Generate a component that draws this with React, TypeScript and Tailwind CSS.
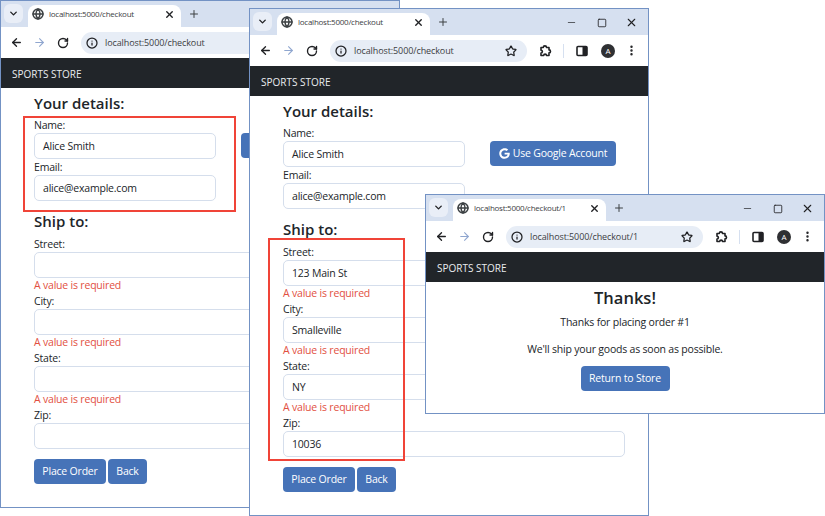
import React from 'react';
import { ArrowLeft, ArrowRight, ChevronDown, Globe, Info, Minus, MoreVertical, Plus, RotateCw, Square, Star, X } from 'lucide-react';
import { FaGoogle } from 'react-icons/fa';

const btn = 'flex items-center justify-center h-[25px] rounded-[4px] bg-[#4673b8] text-white text-[10.5px] tracking-[-0.2px]';

function Browser({ url, className, children }: { url: string; className: string; children: React.ReactNode }) {
  return (
    <div className={`absolute w-[400px] bg-white border border-[#7392c4] overflow-hidden ${className}`}>
      <div className="flex items-end h-[26px] bg-[#d6e0f0] pl-[3px] text-[#202124]">
        <div className="flex items-center justify-center w-[19px] h-[19px] mb-[4px] rounded-[6px] bg-[#e9eef7]">
          <ChevronDown size={11} strokeWidth={3} />
        </div>
        <div className="flex items-center w-[153px] h-[22px] ml-[5px] pl-[3px] pb-[4px] rounded-t-[8px] bg-white">
          <Globe size={12} strokeWidth={3} className="ml-[1px] text-[#3c4043]" />
          <span className="ml-[5px] text-[8px] tracking-[-0.25px] text-[#3c4043]">{url}</span>
          <X size={11} strokeWidth={3} className="ml-auto mr-[6px]" />
        </div>
        <Plus size={12} strokeWidth={2} className="ml-[7px] mb-[7px] text-[#3c4043]" />
        <Minus size={11} strokeWidth={1.5} className="ml-auto mb-[7px]" />
        <Square size={10} strokeWidth={2} className="ml-[20px] mb-[7px]" />
        <X size={13} strokeWidth={2} className="ml-[18px] mr-[10px] mb-[6px]" />
      </div>
      <div className="flex items-center h-[31px] pl-[9px] pr-[10px] bg-white text-[#202124]">
        <ArrowLeft size={13} strokeWidth={2.5} />
        <ArrowRight size={13} strokeWidth={2} className="ml-[10px] text-[#8fa6cf]" />
        <RotateCw size={12} strokeWidth={2.75} className="ml-[11px]" />
        <div className="flex items-center w-[197px] h-[22px] ml-[12px] pl-[5px] rounded-full bg-[#e7edf6]">
          <Info size={12} strokeWidth={2.5} />
          <span className="ml-[7px] text-[9px] tracking-[-0.1px] text-[#3c4043]">{url}</span>
          <Star size={12} strokeWidth={2.5} className="ml-auto mr-[10px]" />
        </div>
        <svg width="13" height="13" viewBox="0 0 13 13" className="ml-[12px]" fill="none" stroke="#202124" strokeWidth="1.6" strokeLinejoin="round">
          <path d="M2 3.5h2.3a1.6 1.6 0 0 1 3.2 0H10v2.4a1.5 1.5 0 0 1 0 3V11.5H7.5a1.4 1.4 0 0 0-2.8 0H2V9a1.4 1.4 0 0 0 0-2.8z" />
        </svg>
        <div className="w-px h-[14px] ml-[11px] bg-[#d6e0f0]" />
        <svg width="12" height="12" viewBox="0 0 12 12" className="ml-[12px]">
          <rect x="1" y="1.5" width="10" height="9" rx="1" fill="none" stroke="#202124" strokeWidth="1.6" />
          <rect x="6.5" y="1.5" width="4.5" height="9" fill="#202124" />
        </svg>
        <div className="flex items-center justify-center w-[14px] h-[14px] ml-[13px] rounded-full bg-[#2f3033] text-white text-[8px] leading-none">A</div>
        <MoreVertical size={13} strokeWidth={2.5} className="ml-auto" />
      </div>
      <div className="flex items-center h-[30px] pl-[11px] pt-[2px] bg-[#212529] text-[#e9ecef] text-[10px]">SPORTS STORE</div>
      {children}
    </div>
  );
}

function Field({ label, value, error, full }: { label: string; value?: string; error?: boolean; full?: boolean }) {
  return (
    <div className="text-[10.5px] tracking-[-0.2px]">
      <div className="h-4 leading-4">{label}</div>
      <div className={`flex items-center h-[26px] pl-[8px] pt-[1px] rounded-[5px] border border-[#d5deec] ${full ? 'w-[342px]' : 'w-[182px]'}`}>{value}</div>
      {error && <div className="h-[15px] leading-[15px] text-[#e2503f]">A value is required</div>}
    </div>
  );
}

function CheckoutForm({ values }: { values: string[] }) {
  return (
    <div className="pl-[33px] pt-[4px] pb-[23px] text-[#212529]">
      <h2 className="h-[22px] mb-[3px] text-[15px] leading-[22px] font-semibold">Your details:</h2>
      <div className="flex">
        <div>
          <Field label="Name:" value="Alice Smith" />
          <Field label="Email:" value="alice@example.com" />
        </div>
        <button className={`${btn} w-[126px] mt-4 ml-[25px] gap-[3px]`}>
          <FaGoogle size={11} />
          Use Google Account
        </button>
      </div>
      <h2 className="h-[22px] mt-[9px] mb-[4px] text-[15px] leading-[22px] font-semibold">Ship to:</h2>
      <Field full label="Street:" value={values[0]} error />
      <Field full label="City:" value={values[1]} error />
      <Field full label="State:" value={values[2]} error />
      <Field full label="Zip:" value={values[3]} />
      <div className="flex gap-[2px] mt-[10px]">
        <button className={`${btn} w-[72px]`}>Place Order</button>
        <button className={`${btn} w-[39px]`}>Back</button>
      </div>
    </div>
  );
}

export default function App() {
  return (
    <div className="relative w-[825px] h-[516px] overflow-hidden bg-white font-['Open_Sans','Noto_Sans',sans-serif]">
      <Browser url="localhost:5000/checkout" className="left-0 top-0 h-[508px] border-[#4673b8]">
        <CheckoutForm values={['', '', '', '']} />
      </Browser>
      <Browser url="localhost:5000/checkout" className="left-[249px] top-[8px] h-[508px]">
        <CheckoutForm values={['123 Main St', 'Smalleville', 'NY', '10036']} />
      </Browser>
      <Browser url="localhost:5000/checkout/1" className="left-[425px] top-[194px] h-[220px]">
        <div className="flex flex-col items-center text-[#212529]">
          <h1 className="mt-[2px] text-[16.5px] leading-[27px] font-semibold">Thanks!</h1>
          <p className="mt-[3px] text-[10.5px] tracking-[-0.2px] leading-4">Thanks for placing order #1</p>
          <p className="mt-[11px] text-[10.5px] tracking-[-0.2px] leading-4">We'll ship your goods as soon as possible.</p>
          <button className={`${btn} w-[89px] mt-[9px]`}>Return to Store</button>
        </div>
      </Browser>
      <div className="absolute left-[23px] top-[116px] w-[213px] h-[96px] border-2 border-[#f04438]" />
      <div className="absolute left-[268px] top-[238px] w-[137px] h-[223px] border-2 border-[#f04438]" />
    </div>
  );
}
